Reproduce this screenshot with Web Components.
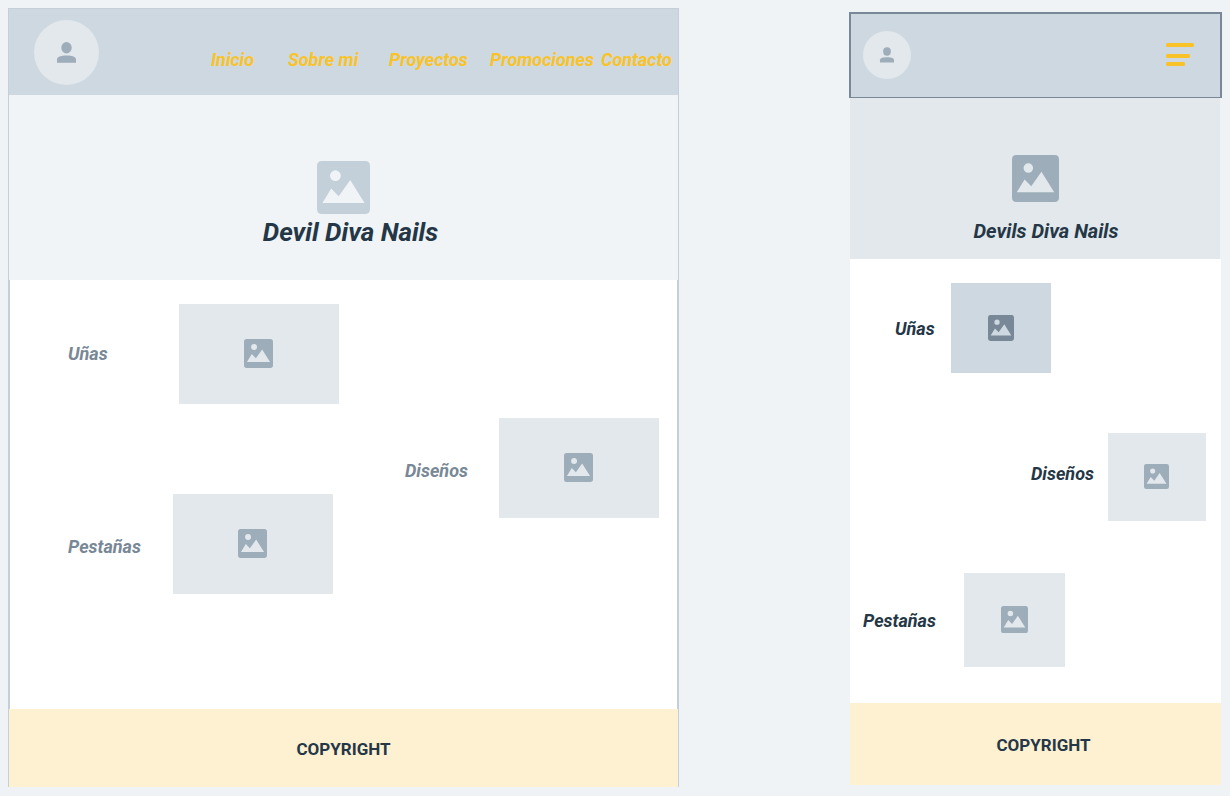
<!DOCTYPE html>
<html lang="es">
<head>
<meta charset="utf-8">
<meta name="viewport" content="width=device-width, initial-scale=1">
<title>Devil Diva Nails</title>
<style>
  body {
    margin: 0;
    background: #eff3f6;
    color: #253746;
    font-family: Roboto, "Liberation Sans", sans-serif;
  }
</style>
</head>
<body>
<nails-board></nails-board>

<script>
  const define = (name, html) => {
    const template = document.createElement('template');
    template.innerHTML = html;
    customElements.define(name, class extends HTMLElement {
      constructor() {
        super();
        this.attachShadow({ mode: 'open' }).append(template.content.cloneNode(true));
      }
    });
  };

  // Picture placeholder: rounded square with a sun and two peaks
  define('picture-icon', `
    <style>
      :host { display: block; width: var(--size, 29px); height: var(--size, 29px); color: var(--ink, #9dadb9); }
      svg { display: block; width: 100%; height: 100%; }
    </style>
    <svg viewBox="0 0 53 53" aria-hidden="true">
      <path fill="currentColor" fill-rule="evenodd" d="M5 0H48Q53 0 53 5V48Q53 53 48 53H5Q0 53 0 48V5Q0 0 5 0ZM18.4 9.3a5.4 5.4 0 1 0 0 10.8a5.4 5.4 0 1 0 0-10.8ZM5.4 42H47.6L33.2 19L21.7 35.3L14.2 27.5Z"/>
    </svg>`);

  define('user-avatar', `
    <style>
      :host { display: block; flex: none; width: var(--size, 65px); height: var(--size, 65px); }
      svg { display: block; width: 100%; height: 100%; }
    </style>
    <svg viewBox="0 0 65 65" role="img" aria-label="Perfil">
      <circle cx="32.5" cy="32.5" r="32.5" fill="#e2e8ec"/>
      <g fill="#9dadb9">
        <ellipse cx="32.5" cy="27.7" rx="5.2" ry="5.7"/>
        <path d="M23 42.8V39.5C23 36.5 27 35.4 32.5 35.4S42 36.5 42 39.5V42.8Z"/>
      </g>
    </svg>`);

  define('nav-link', `
    <style>
      :host { display: block; }
      a { color: #f9c327; font: italic 700 18px/22px Roboto, "Liberation Sans", sans-serif; text-decoration: none; white-space: nowrap; }
    </style>
    <a href="#"><slot></slot></a>`);

  define('menu-button', `
    <style>
      :host { display: block; }
      button { display: block; padding: 0; border: 0; background: none; cursor: pointer; }
      svg { display: block; }
    </style>
    <button type="button" aria-label="Abrir menú">
      <svg width="28" height="23" viewBox="0 0 28 23" fill="#f9c327">
        <rect width="28" height="4" rx="1.5"/>
        <rect y="11" width="24" height="4" rx="1.5"/>
        <rect y="19" width="19" height="4" rx="1.5"/>
      </svg>
    </button>`);

  // Caption on the left, picture box on the right
  define('gallery-item', `
    <style>
      :host { display: block; }
      figure { display: grid; grid-template-columns: var(--caption, 111px) var(--w, 160px); align-items: center; margin: 0; }
      figcaption { padding: var(--caption-pad, 0); font: italic 700 18px/22px Roboto, "Liberation Sans", sans-serif; }
      div { display: grid; place-items: center; box-sizing: border-box; height: var(--h, 100px); padding: 0 1px 1px 0; background: var(--box, #e2e8ec); }
    </style>
    <figure>
      <figcaption><slot></slot></figcaption>
      <div><picture-icon></picture-icon></div>
    </figure>`);

  define('hero-banner', `
    <style>
      :host { display: flex; flex-direction: column; align-items: center; box-sizing: border-box; }
      h1 { margin: 0; font: inherit; }
    </style>
    <picture-icon></picture-icon>
    <h1><slot></slot></h1>`);

  define('copyright-bar', `
    <style>
      :host { display: block; background: #fdf1d2; text-align: center; font: 700 17px/22px Roboto, "Liberation Sans", sans-serif; }
    </style>
    <slot></slot>`);

  define('desktop-page', `
    <style>
      :host { display: block; }
      header { display: flex; justify-content: space-between; align-items: flex-start; padding: 11px 8px 10px 25px; background: #ced8e0; border: 1px solid #c3d0da; border-bottom: 0; }
      nav { display: grid; grid-template-columns: minmax(0, 77fr) minmax(0, 101fr) minmax(0, 101fr) minmax(0, 111fr) minmax(0, 69fr); flex: 0 1 459px; padding-top: 29px; }
      hero-banner { --size: 53px; --ink: #c3cfd9; padding: 66px 0 32px; gap: 2px; background: #f0f4f7; border: solid #c3d0da; border-width: 0 1px; font: italic 700 26px/32px Roboto, "Liberation Sans", sans-serif; }
      hero-banner span { padding-left: 14px; }
      main { display: grid; grid-template-columns: 337fr 330fr; padding: 24px 0 115px; background: #fff; border: solid #c3d0da; border-width: 0 2px; color: #788896; }
      .left { display: grid; gap: 90px; padding-left: 58px; }
      .right { padding: 114px 18px 0 0; justify-self: end; }
      .lashes { --caption: 105px; --caption-pad: 6px 0 0; }
      .designs { --caption: 94px; --caption-pad: 6px 0 0; }
      copyright-bar { padding: 29px 0 27px; border: solid #c3d0da; border-width: 0 1px; }
    </style>
    <header>
      <user-avatar></user-avatar>
      <nav>
        <nav-link>Inicio</nav-link>
        <nav-link>Sobre mi</nav-link>
        <nav-link>Proyectos</nav-link>
        <nav-link>Promociones</nav-link>
        <nav-link>Contacto</nav-link>
      </nav>
    </header>
    <hero-banner><span>Devil Diva Nails</span></hero-banner>
    <main>
      <div class="left">
        <gallery-item>Uñas</gallery-item>
        <gallery-item class="lashes">Pestañas</gallery-item>
      </div>
      <div class="right">
        <gallery-item class="designs">Diseños</gallery-item>
      </div>
    </main>
    <copyright-bar>COPYRIGHT</copyright-bar>`);

  define('mobile-page', `
    <style>
      :host { display: block; }
      header { display: flex; justify-content: space-between; align-items: center; padding: 17px 26px 18px 12px; background: #ced8e0; border: solid #788896; border-width: 2px 2px 1px; }
      header user-avatar { --size: 48px; }
      menu-button { padding-bottom: 2px; }
      hero-banner { --size: 47px; margin: 0 2px 0 1px; padding: 57px 0 16px; gap: 17px; background: #e2e8ec; font: italic 700 20px/24px Roboto, "Liberation Sans", sans-serif; }
      hero-banner span { padding-left: 22px; }
      main { display: flex; flex-direction: column; align-items: flex-start; margin: 0 1px; padding: 24px 15px 36px 13px; background: #fff; }
      .nails { --caption: 56px; --w: 100px; --h: 90px; --box: #ced8e0; --ink: #788896; --size: 26px; --caption-pad: 2px 0 0; margin-left: 32px; }
      .designs { --caption: 77px; --w: 98px; --h: 88px; --size: 25px; --caption-pad: 0 0 6px; align-self: flex-end; margin: 60px 0 52px; }
      .lashes { --caption: 101px; --w: 101px; --h: 94px; --size: 27px; --caption-pad: 2px 0 0; }
      copyright-bar { margin: 0 1px; padding: 31px 0 29px 16px; }
    </style>
    <header>
      <user-avatar></user-avatar>
      <menu-button></menu-button>
    </header>
    <hero-banner><span>Devils Diva Nails</span></hero-banner>
    <main>
      <gallery-item class="nails">Uñas</gallery-item>
      <gallery-item class="designs">Diseños</gallery-item>
      <gallery-item class="lashes">Pestañas</gallery-item>
    </main>
    <copyright-bar>COPYRIGHT</copyright-bar>`);

  define('nails-board', `
    <style>
      :host { display: grid; grid-template-columns: 671fr 373fr; column-gap: 170px; align-items: start; padding: 8px; }
      mobile-page { margin-top: 4px; }
    </style>
    <desktop-page></desktop-page>
    <mobile-page></mobile-page>`);
</script>
</body>
</html>
